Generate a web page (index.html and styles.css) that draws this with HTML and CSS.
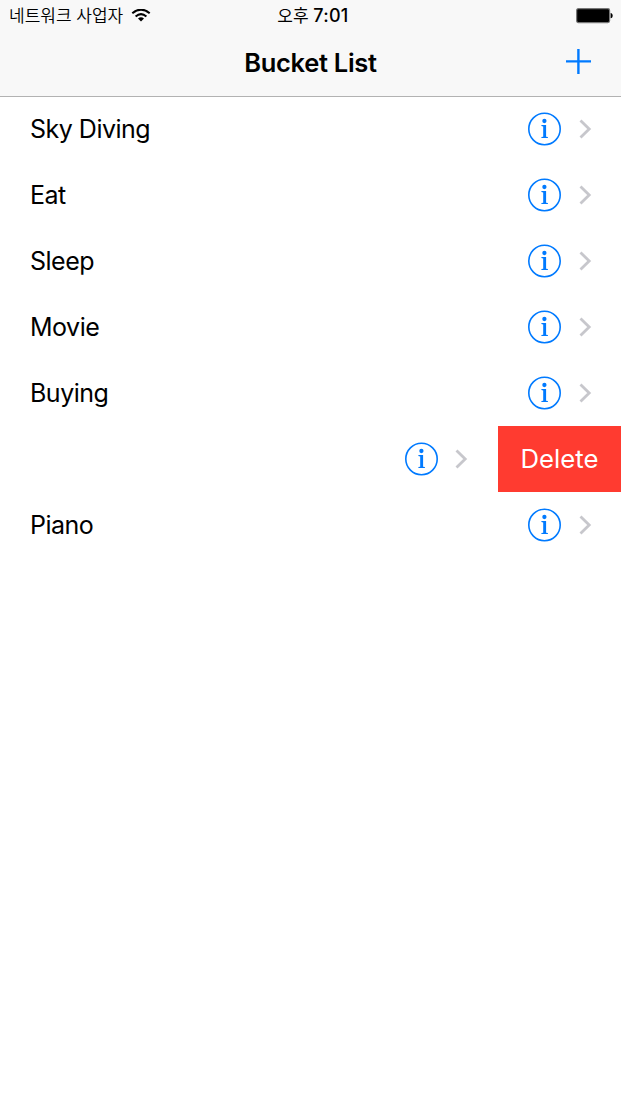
FILE: index.html
```html
<!DOCTYPE html>
<html lang="ko">
<head>
<meta charset="utf-8">
<title>Bucket List</title>
<link rel="stylesheet" href="styles.css">
</head>
<body>
<svg class="defs" width="0" height="0" aria-hidden="true">
  <symbol id="info" viewBox="0 0 34 34">
    <circle cx="16.5" cy="17" r="15.7" fill="none" stroke="#007aff" stroke-width="1.6"/>
    <circle cx="16.4" cy="9" r="2.15" fill="#007aff"/>
    <path d="M13.4 13.1H18.1V24.7L19.9 25.1V26H13.4V25.1L15.2 24.7V14.4L13.4 14.1Z" fill="#007aff"/>
  </symbol>
  <symbol id="chevron" viewBox="0 0 13 20">
    <path d="M1.5 1.5L10.2 10L1.5 18.5" fill="none" stroke="#c7c7cc" stroke-width="2.8"/>
  </symbol>
</svg>
<header class="header">
  <div class="status">
    <div class="carrier"><span class="carrier-name">네트워크 사업자</span>
      <svg class="wifi" width="20" height="14" viewBox="0 0 20 14">
        <path d="M1.3 4.2Q10 -2.9 18.7 4.2M4.6 7.5Q10 2.9 15.4 7.5" fill="none" stroke="#000" stroke-width="2.1"/>
        <path d="M7 9.5Q10 6.9 13 9.5L10 12.5Z"/>
      </svg>
    </div>
    <div class="time"><span class="meridiem">오후</span> <span class="clock">7:01</span></div>
    <svg class="battery" width="38" height="16" viewBox="0 0 38 16">
      <rect x=".6" y=".6" width="33" height="14" rx="1.8" fill="#000" stroke="#777" stroke-width="1.2"/>
      <path d="M34.6 5C37.4 5.3 37.4 10 34.6 10.3Z"/>
    </svg>
  </div>
  <div class="nav">
    <h1 class="title">Bucket List</h1>
    <svg class="add" width="26" height="28" viewBox="0 0 26 28"><path d="M0 12.4H25M12.4 0V25" stroke="#007aff" stroke-width="2.4"/></svg>
  </div>
</header>
<main class="list">
  <div class="row"><span class="label">Sky Diving</span><svg class="info"><use href="#info"/></svg><svg class="chevron"><use href="#chevron"/></svg></div>
  <div class="row"><span class="label">Eat</span><svg class="info"><use href="#info"/></svg><svg class="chevron"><use href="#chevron"/></svg></div>
  <div class="row"><span class="label">Sleep</span><svg class="info"><use href="#info"/></svg><svg class="chevron"><use href="#chevron"/></svg></div>
  <div class="row"><span class="label">Movie</span><svg class="info"><use href="#info"/></svg><svg class="chevron"><use href="#chevron"/></svg></div>
  <div class="row"><span class="label">Buying</span><svg class="info"><use href="#info"/></svg><svg class="chevron"><use href="#chevron"/></svg></div>
  <div class="row swiped"><span class="label"></span><svg class="info"><use href="#info"/></svg><svg class="chevron"><use href="#chevron"/></svg><button class="delete">Delete</button></div>
  <div class="row"><span class="label">Piano</span><svg class="info"><use href="#info"/></svg><svg class="chevron"><use href="#chevron"/></svg></div>
</main>
</body>
</html>
```
FILE: styles.css
```css
* { box-sizing: border-box; }
body {
  margin: 0;
  min-height: 1104px;
  background: #fff;
  color: #000;
  font-family: Inter, "Noto Sans CJK KR", sans-serif;
}
.defs { display: block; }
svg { flex: none; }
.header {
  height: 97px;
  background: #f8f8f8;
  border-bottom: 1px solid #b2b2b2;
}
.status {
  display: grid;
  grid-template-columns: 1fr auto 1fr;
  align-items: center;
  height: 30px;
  padding: 0 7px 0 9px;
  font-size: 17px;
  line-height: 30px;
}
.carrier { display: flex; align-items: center; gap: 8px; }
.carrier-name {
  padding-bottom: 2px;
  font-family: "Noto Sans CJK KR", sans-serif;
  font-weight: 350;
  line-height: 28px;
}
.time { padding-left: 3px; white-space: nowrap; font-weight: 500; }
.meridiem { font-family: "Noto Sans CJK KR", sans-serif; font-weight: 400; }
.clock { font-size: 18px; letter-spacing: 0.3px; }
.battery { justify-self: end; }
.nav {
  display: grid;
  grid-template-columns: 1fr auto 1fr;
  align-items: center;
  height: 66px;
  padding: 0 29px;
}
.title {
  grid-column: 2;
  margin: 0;
  font-size: 25.5px;
  font-weight: 600;
  line-height: 66px;
  letter-spacing: -0.3px;
}
.add { justify-self: end; }
.list { margin-top: -1px; }
.row {
  display: flex;
  align-items: center;
  height: 66px;
  padding: 0 29px 0 30px;
}
.label {
  flex: 1;
  font-size: 25px;
  line-height: 66px;
  letter-spacing: -0.5px;
}
.info { width: 34px; height: 34px; margin-right: 17px; }
.chevron { width: 13px; height: 20px; }
.swiped { padding-right: 0; }
.swiped .info { margin-right: 16px; }
.delete {
  width: 123px;
  height: 66px;
  margin-left: 30px;
  padding: 0;
  border: 0;
  background: #ff3b30;
  color: #fff;
  font: 400 25.7px/66px Inter, sans-serif;
}
```
